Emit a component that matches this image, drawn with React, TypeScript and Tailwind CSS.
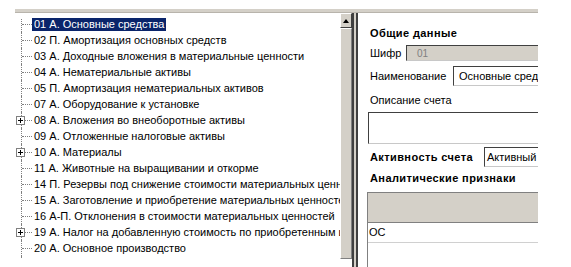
import React from "react";

type Row = { t: string; sel?: boolean; plus?: boolean };

const rows: Row[] = [
  { t: "01 А. Основные средства", sel: true },
  { t: "02 П. Амортизация основных средств" },
  { t: "03 А. Доходные вложения в материальные ценности" },
  { t: "04 А. Нематериальные активы" },
  { t: "05 П. Амортизация нематериальных активов" },
  { t: "07 А. Оборудование к установке" },
  { t: "08 А. Вложения во внеоборотные активы", plus: true },
  { t: "09 А. Отложенные налоговые активы" },
  { t: "10 А. Материалы", plus: true },
  { t: "11 А. Животные на выращивании и откорме" },
  { t: "14 П. Резервы под снижение стоимости материальных ценностей" },
  { t: "15 А. Заготовление и приобретение материальных ценностей" },
  { t: "16 А-П. Отклонения в стоимости материальных ценностей" },
  { t: "19 А. Налог на добавленную стоимость по приобретенным ценностям", plus: true },
  { t: "20 А. Основное производство" },
  { t: "23 А. Вспомогательные производства" },
];

function TreeRow({ r, first }: { r: Row; first: boolean }) {
  return (
    <div className="flex h-[16px] items-center whitespace-nowrap">
      <div className="relative h-full w-[32px] shrink-0">
        <div
          className={`absolute left-[21px] bottom-0 border-l border-dotted border-[#808080] ${
            first ? "top-[3px]" : "top-0"
          }`}
        />
        <div className="absolute left-[22px] top-[8px] w-[10px] border-t border-dotted border-[#808080]" />
        {r.plus && (
          <div className="absolute left-[16px] top-[4px] flex h-[9px] w-[9px] items-center justify-center border border-[#808080] bg-white">
            <div className="relative h-[5px] w-[5px]">
              <div className="absolute left-0 top-[2px] h-[1px] w-[5px] bg-black" />
              <div className="absolute left-[2px] top-0 h-[5px] w-[1px] bg-black" />
            </div>
          </div>
        )}
      </div>
      <span
        className={`px-[2px] leading-[13px] ${
          r.sel ? "bg-[#0a246a] text-white" : "text-black"
        }`}
      >
        {r.t}
      </span>
    </div>
  );
}

function Sunken({
  className,
  children,
}: {
  className: string;
  children?: React.ReactNode;
}) {
  return (
    <div
      className={`border border-t-[#404040] border-l-[#404040] border-b-[#c8c8c8] border-r-[#c8c8c8] ${className}`}
    >
      {children}
    </div>
  );
}

export default function App() {
  return (
    <div className="relative h-[267px] w-[571px] overflow-hidden bg-white font-['Liberation_Sans',Arial,sans-serif] text-[11px] text-black">
      <div className="h-[9px]" />
      <div className="ml-[15px] h-[4px] w-[523px] border-b border-[#b8b4ac] bg-[#d4d0c8]" />
      <div className="flex h-[254px]">
        {/* tree */}
        <div className="flex h-[246px] w-[352px] shrink-0">
          <div className="w-[340px] shrink-0 overflow-hidden pt-[3px]">
            {rows.map((r, i) => (
              <TreeRow key={i} r={r} first={i === 0} />
            ))}
          </div>
          {/* scrollbar */}
          <div className="flex w-[12px] shrink-0 flex-col bg-[#e8e6e1]">
            <div className="flex h-[15px] items-center justify-center border border-t-white border-l-white border-b-[#404040] border-r-[#404040] bg-[#d4d0c8]">
              <div className="h-0 w-0 border-x-[3px] border-b-[4px] border-x-transparent border-b-black" />
            </div>
            <div className="flex-1 border border-t-white border-l-white border-b-[#808080] border-r-[#808080] bg-[#d4d0c8]" />
          </div>
        </div>
        {/* splitter */}
        <div className="w-[2px] shrink-0 bg-[#404040]" />
        <div className="w-[2px] shrink-0 bg-[#d4d0c8]" />
        <div className="w-[2px] shrink-0 bg-[#404040]" />
        {/* right panel */}
        <div className="w-[180px] shrink-0 overflow-hidden whitespace-nowrap pl-[10px]">
          <div className="ml-[2px] mt-[12px] h-[16px] font-bold leading-[16px] tracking-[0.4px]">
            Общие данные
          </div>
          <div className="mt-[4px] flex h-[16px] items-center">
            <div className="ml-[2px] w-[36px] shrink-0">Шифр</div>
            <Sunken className="flex h-[16px] w-[200px] shrink-0 items-center bg-[#d4d0c8] pl-[10px] text-[10px] text-[#808080]">
              01
            </Sunken>
          </div>
          <div className="mt-[5px] flex h-[20px] items-center">
            <div className="ml-[2px] w-[83px] shrink-0">Наименование</div>
            <Sunken className="flex h-[20px] w-[200px] shrink-0 items-center bg-white pl-[5px]">
              Основные средства
            </Sunken>
          </div>
          <div className="ml-[2px] mt-[6px] h-[16px] leading-[16px]">Описание счета</div>
          <Sunken className="mt-[4px] h-[32px] w-[200px] bg-white" />
          <div className="mt-[3px] flex h-[20px] items-center">
            <div className="ml-[2px] w-[114px] shrink-0 font-bold tracking-[0.4px]">
              Активность счета
            </div>
            <Sunken className="flex h-[20px] w-[100px] shrink-0 items-center bg-white pl-[2px]">
              Активный
            </Sunken>
          </div>
          <div className="ml-[2px] mt-[3px] h-[16px] font-bold leading-[16px] tracking-[0.4px]">
            Аналитические признаки
          </div>
          <div className="-ml-[1px] mt-[6px] h-[100px] w-[200px] border-l border-t border-[#808080]">
            <div className="h-[30px] border-b border-[#808080] bg-[#d4d0c8]" />
            <div className="flex h-[20px] items-center border-b border-[#d0d0d0] pl-[1px]">
              ОС
            </div>
          </div>
        </div>
      </div>
    </div>
  );
}
